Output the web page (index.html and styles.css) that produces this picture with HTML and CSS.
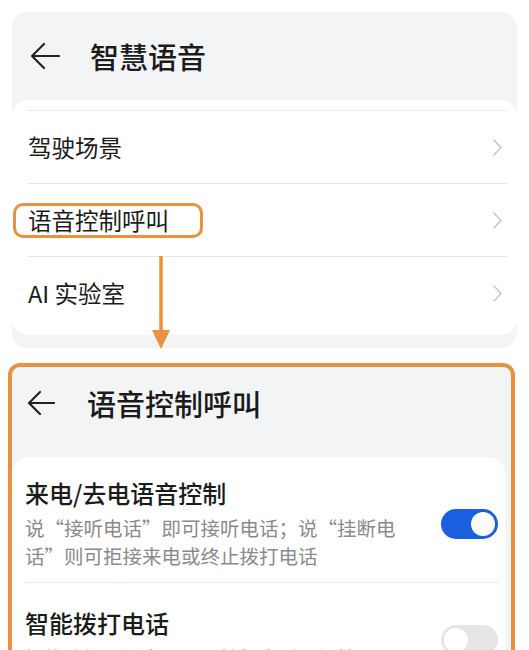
FILE: index.html
```html
<!DOCTYPE html>
<html lang="zh-CN">
<head>
<meta charset="UTF-8">
<meta name="viewport" content="width=device-width, initial-scale=1.0">
<title>智慧语音</title>
<link rel="stylesheet" href="styles.css">
</head>
<body>
    <div class="screen">
        <div class="appbar">
            <svg class="back" width="30" height="28" viewBox="0 0 30 28"><path d="M29 14H2M14 2L2 14L14 26" fill="none" stroke="#222" stroke-width="2.2" stroke-linecap="round" stroke-linejoin="round"/></svg>
            <h1>智慧语音</h1>
        </div>
        <div class="card">
            <div class="list-row">
                <span class="label">驾驶场景</span>
                <svg class="chevron" width="9" height="17" viewBox="0 0 9 17"><path d="M1 1l7 7.5L1 16" fill="none" stroke="#c6c6c6" stroke-width="1.5" stroke-linecap="round" stroke-linejoin="round"/></svg>
            </div>
            <div class="list-row">
                <span class="label marked">语音控制呼叫</span>
                <svg class="chevron" width="9" height="17" viewBox="0 0 9 17"><path d="M1 1l7 7.5L1 16" fill="none" stroke="#c6c6c6" stroke-width="1.5" stroke-linecap="round" stroke-linejoin="round"/></svg>
            </div>
            <div class="list-row">
                <span class="label">AI 实验室</span>
                <svg class="chevron" width="9" height="17" viewBox="0 0 9 17"><path d="M1 1l7 7.5L1 16" fill="none" stroke="#c6c6c6" stroke-width="1.5" stroke-linecap="round" stroke-linejoin="round"/></svg>
            </div>
        </div>
    </div>

    <!-- arrow from the marked row down to the next screen -->
    <svg class="pointer" width="20" height="94" viewBox="0 0 20 94"><path d="M10 0V76" stroke="#e9913f" stroke-width="3.5"/><path d="M1 74H19L10 93Z" fill="#e9913f"/></svg>

    <div class="screen outlined">
        <div class="appbar sub">
            <svg class="back" width="28" height="26" viewBox="0 0 28 26"><path d="M27 13H2M13 2L2 13L13 24" fill="none" stroke="#222" stroke-width="2.2" stroke-linecap="round" stroke-linejoin="round"/></svg>
            <h1>语音控制呼叫</h1>
        </div>
        <div class="card">
            <div class="switch-row">
                <div class="switch-text">
                    <div class="switch-title">来电/去电语音控制</div>
                    <div class="switch-desc">说“接听电话”即可接听电话；说“挂断电话”则可拒接来电或终止拨打电话</div>
                </div>
                <span class="switch on"></span>
            </div>
            <div class="switch-row">
                <div class="switch-text">
                    <div class="switch-title">智能拨打电话</div>
                    <div class="switch-desc">智能选择通话卡号码，拨打电话更便捷</div>
                </div>
                <span class="switch"></span>
            </div>
        </div>
    </div>
</body>
</html>
```

FILE: styles.css
```css
body {
    margin: 0;
    position: relative;
    background-color: #fff;
    color: #1b1b1b;
    font-family: "Noto Sans CJK SC", "Noto Sans", sans-serif;
    overflow: hidden;
}
.screen {
    margin: 12px 12px 0;
    padding-bottom: 13px;
    background-color: #f3f4f6;
    border-radius: 16px;
}
.appbar {
    height: 88px;
    display: flex;
    align-items: center;
    gap: 30px;
    padding-left: 18px;
}
.appbar h1 {
    margin: 0;
    font-size: 29px;
    font-weight: 500;
    line-height: 36px;
}
.card {
    background-color: #fff;
    border-radius: 16px;
    padding: 10px 0 6px;
}
.list-row {
    height: 72px;
    margin: 0 10px 0 16px;
    border-top: 1px solid #e7e7e7;
    display: flex;
    align-items: center;
    justify-content: space-between;
}
.label {
    font-size: 23.5px;
    line-height: 30px;
}
.chevron {
    margin-right: 5px;
}
/* orange callout round one label */
.marked {
    position: relative;
}
.marked::after {
    content: "";
    position: absolute;
    left: -15px;
    right: -34px;
    top: -2px;
    bottom: -3px;
    border: 3px solid #e9913f;
    border-radius: 10px;
}
.pointer {
    position: absolute;
    left: 151px;
    top: 256px;
}

.outlined {
    margin: 15px 14px 0 8px;
    border: 4px solid #e9913f;
    border-radius: 12px;
    height: 400px;
}
.appbar.sub {
    height: 72px;
    gap: 32px;
    padding-left: 15px;
}
.outlined .card {
    margin: 18px 6px 0 0;
    padding: 0;
    height: 300px;
}
.switch-row {
    display: flex;
    align-items: center;
    justify-content: space-between;
    margin: 0 7px 0 13px;
    padding: 25px 0 12px;
}
.switch-row:first-child {
    padding-top: 21px;
    border-bottom: 1px solid #e7e7e7;
}
.switch-title {
    font-size: 24px;
    font-weight: 500;
    line-height: 30px;
}
.switch-desc {
    max-width: 375px;
    margin-top: 6px;
    font-size: 19.5px;
    line-height: 28px;
    color: #8a8a8a;
}
.switch {
    position: relative;
    flex: none;
    width: 57px;
    height: 30px;
    border-radius: 15px;
    background-color: #e6e6e6;
}
.switch::after {
    content: "";
    position: absolute;
    top: 3px;
    left: 3px;
    width: 24px;
    height: 24px;
    border-radius: 50%;
    background-color: #fff;
}
.switch.on {
    background-color: #1a5fe0;
}
.switch.on::after {
    left: auto;
    right: 3px;
}
```
